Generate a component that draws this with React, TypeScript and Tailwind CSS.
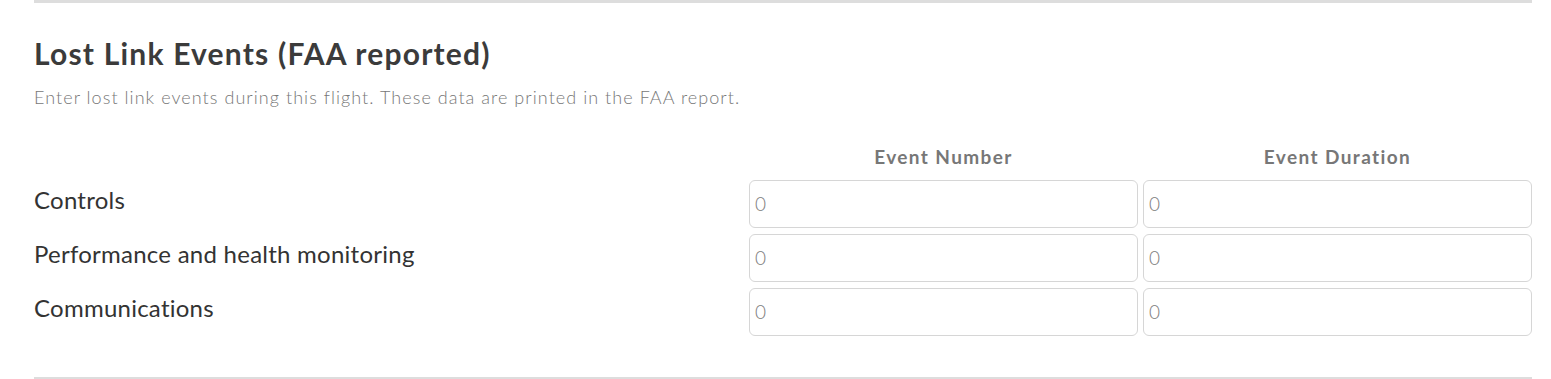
const rows = ["Controls", "Performance and health monitoring", "Communications"];

function CountInput() {
  return (
    <input
      type="text"
      defaultValue="0"
      className="h-[48px] w-full rounded-[6px] border border-[#d6d6d6] bg-white pb-[2px] pl-[5px] pr-[6px] text-[19px] font-light text-[#7d7d7d] outline-none"
    />
  );
}

export default function App() {
  return (
    <div className="min-h-[379px] bg-white" style={{ fontFamily: "Lato, 'Noto Sans', sans-serif" }}>
      <div className="ml-[34px] w-[1498px]">
        <div className="h-[3px] bg-[#dddddd]" />
        <h2 className="mt-[33px] text-[30px] font-bold leading-[34px] tracking-[1.2px] text-[#3b3b3b]">
          Lost Link Events (FAA reported)
        </h2>
        <p className="mt-[16px] text-[18px] font-light leading-[22px] tracking-[1.05px] text-[#777777]">
          Enter lost link events during this flight. These data are printed in the FAA report.
        </p>

        <div className="mt-[38px] grid grid-cols-[710px_1fr_1fr] gap-x-[5px] gap-y-[6px] pb-[41px]">
          <div />
          <div className="h-[28px] text-center text-[19px] font-bold leading-[22px] tracking-[1.4px] text-[#777777]">
            Event Number
          </div>
          <div className="h-[28px] text-center text-[19px] font-bold leading-[22px] tracking-[1.4px] text-[#777777]">
            Event Duration
          </div>
          {rows.map((label) => (
            <div key={label} className="contents">
              <div className="flex items-center pb-[9px] text-[24px] leading-[28px] tracking-[0.25px] text-[#333333]">
                {label}
              </div>
              <CountInput />
              <CountInput />
            </div>
          ))}
        </div>
        <div className="h-[2px] bg-[#dddddd]" />
      </div>
    </div>
  );
}
